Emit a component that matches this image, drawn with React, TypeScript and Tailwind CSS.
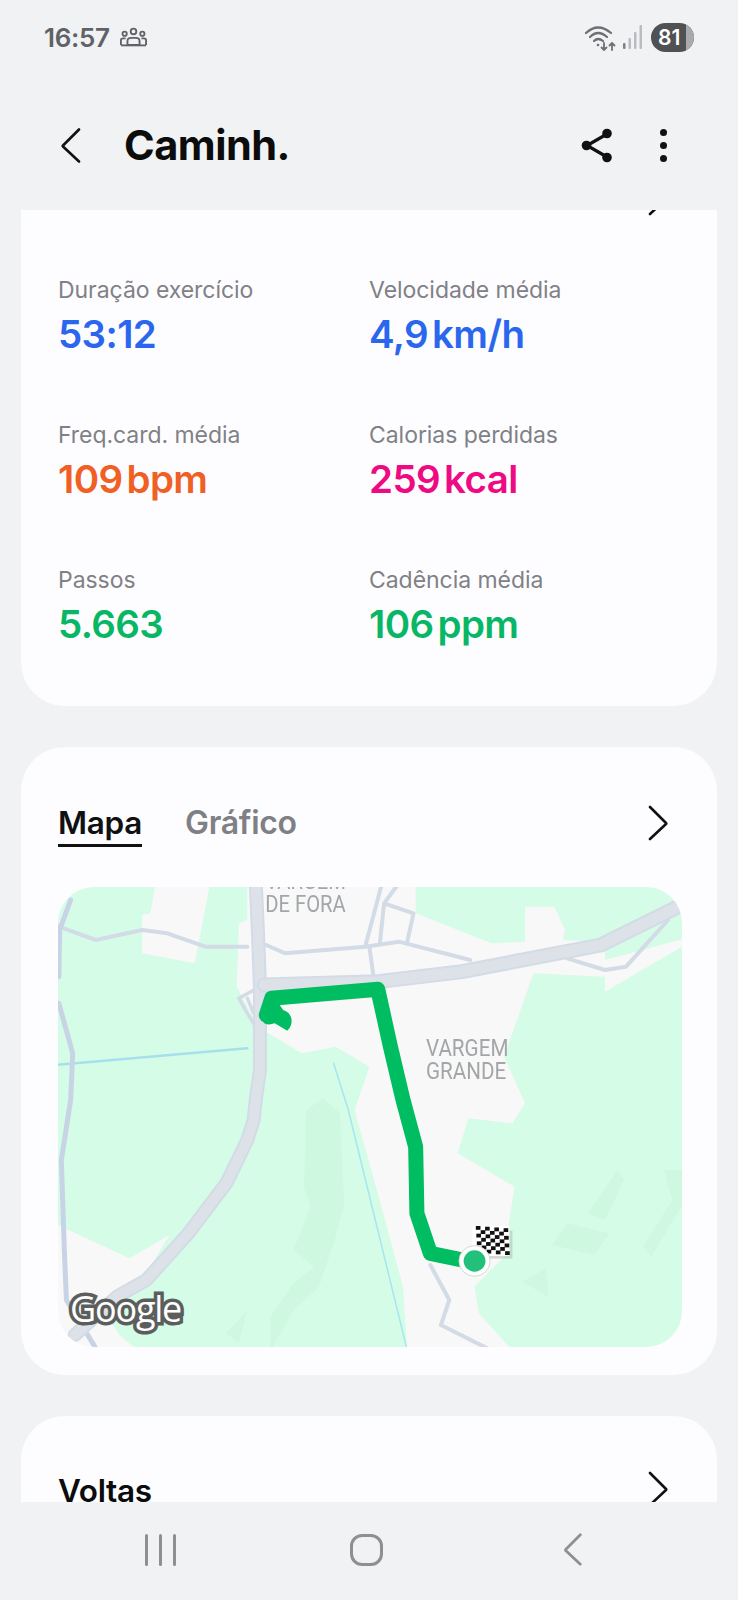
import React from "react";

const font = { fontFamily: "Inter, 'Liberation Sans', sans-serif" };

function Chevron({ dir = "right", className = "", color = "#111", sw = 3 }: { dir?: "left" | "right"; className?: string; color?: string; sw?: number }) {
  return (
    <svg viewBox="0 0 20 36" className={className} fill="none" stroke={color} strokeWidth={sw} strokeLinecap="round" strokeLinejoin="round">
      {dir === "right" ? <path d="M2 2 L18 18 Q18.500 18.500 18 19 L2 34" /> : <path d="M18 2 L2 18 Q1.500 18.500 2 19 L18 34" />}
    </svg>
  );
}

function Stat({ label, value, unit, color }: { label: string; value: string; unit?: string; color: string }) {
  return (
    <div className="flex flex-col h-[145px]">
      <div className="text-[23px] leading-[28px] text-[#808186] tracking-[-0.05px]">{label}</div>
      <div className={`flex gap-[4px] text-[38.500px] leading-[44px] mt-[8px] font-semibold tracking-[-0.6px] ${color}`}>
        <span>{value}</span>
        {unit ? <span>{unit}</span> : null}
      </div>
    </div>
  );
}

function MapArt() {
  const road = (d: string, w: number, c = "#d3dbe6") => (
    <path d={d} fill="none" stroke={c} strokeWidth={w} strokeLinecap="round" strokeLinejoin="round" vectorEffect="non-scaling-stroke" />
  );
  const cells: React.ReactNode[] = [];
  for (let r = 0; r < 7; r++) {
    for (let c = 0; c < 7; c++) {
      if ((r + c) % 2 === 0) {
        cells.push(
          <rect key={`${r}-${c}`} x={1033 + c * 11 + r * 0.6} y={1068 + r * 11.500 + c * 1.100} width={11} height={11.500} fill="#111" />
        );
      }
    }
  }
  return (
    <svg viewBox="40 51 1483 1380" preserveAspectRatio="none" className="absolute inset-0 w-full h-full blur-[0.4px]">
      <rect x="30" y="41" width="1503" height="1400" fill="#d5fce6" />
      <g fill="#f8f8f8">
        <polygon points="270,50 400,50 365,280 240,250 240,135 260,130" />
        <polygon points="470,160 490,150 490,40 890,40 890,130 1070,220 1150,215 1150,110 1220,110 1245,180 1240,210 1340,215 1340,270 1530,205 1530,225 1340,365 1340,320 1170,310 1100,560 1150,700 1120,760 1015,745 990,850 1125,950 1110,1070 1100,1160 1030,1250 1040,1330 1120,1441 870,1441 860,1250 800,970 745,720 780,590 700,530 620,550 540,490 520,480 465,350" />
        <polygon points="30,1060 210,1165 305,1095 240,1230 150,1330 190,1400 230,1441 30,1441" />
      </g>
      <g fill="#cff8e0">
        <polygon points="670,685 710,730 720,1000 700,1100 660,1250 600,1320 545,1441 545,1340 600,1240 650,1190 600,1140 640,1010 625,950 630,720" />
        <polygon points="1370,900 1385,930 1340,1050 1300,1030" />
        <polygon points="1250,1060 1350,1090 1315,1155 1215,1125" />
        <polygon points="1200,1195 1205,1280 1145,1235" />
        <polygon points="1480,900 1530,900 1530,990 1450,1160 1430,1130 1500,990" />
        <polygon points="490,1320 470,1420 440,1390" />
      </g>
      {road("M30 585 L490 535", 2.500, "#a6e0ee")}
      {road("M695 580 L730 720 L870 1441", 1.500, "#a5e6f0")}
      {road("M42 170 L130 210 L240 180 L300 190 L390 230 L490 230", 4)}
      {road("M535 225 L580 250 L770 230 L850 215 L1020 270", 4)}
      {road("M770 230 L810 40 M805 220 L815 100 L885 130 L870 215 M815 100 L850 40", 4)}
      {road("M780 230 L790 320", 4)}
      {road("M1250 265 L1340 300 L1390 290 L1490 150", 4)}
      {road("M70 90 L44 180 L42 320 M42 400 L75 550 L70 690 L48 870 L55 1140 L60 1290 L130 1435", 5, "#c8d4e5")}
      {road("M520 350 L470 385 L490 430 L515 480 M490 385 L505 430", 3.500)}
      {road("M925 1185 L970 1290 L950 1365 L1070 1441", 4)}
      {road("M510 40 L515 180 L520 350 L520 600 L510 690 L505 750 L490 810 L440 940 L350 1090 L250 1230 L180 1280 L80 1395", 14)}
      {road("M510 40 L515 180 L520 350 L520 600 L510 690 L505 750 L490 810 L440 940 L350 1090 L250 1230 L180 1280 L80 1395", 10, "#dde2e9")}
      {road("M530 345 L800 335 L1000 305 L1330 225 L1530 100", 15)}
      {road("M530 345 L800 335 L1000 305 L1330 225 L1530 100", 11, "#dde2e9")}
      <path d="M528 455 C515 430 530 385 548 370 L575 420 C600 430 600 465 585 482 L555 460 C545 465 530 465 528 455 Z" fill="#00bd62" />
      <path d="M535 435 L548 385 L800 358 L830 530 L860 690 L890 830 L893 1030 L925 1150 L1020 1175" fill="none" stroke="#00bd62" strokeWidth={15} strokeLinecap="round" strokeLinejoin="round" vectorEffect="non-scaling-stroke" />
      <rect x="1040" y="1082" width="80" height="84" fill="#9a9a9a" fillOpacity="0.35" />
      <rect x="1025" y="1068" width="88" height="90" fill="#ffffff" />
      {cells}
      <ellipse cx="1030" cy="1173" rx="37" ry="46" fill="#ffffff" stroke="#d5d8d8" strokeWidth="1" vectorEffect="non-scaling-stroke" />
      <ellipse cx="1030" cy="1173" rx="26" ry="32" fill="#22c07a" />
    </svg>
  );
}

export default function App() {
  return (
    <div style={font} className="w-[738px] h-[1600px] bg-[#f1f2f4] flex flex-col overflow-hidden">
      <div className="h-[74px] flex items-center justify-between pl-[44px] pr-[44px] shrink-0">
        <div className="flex items-center gap-[10px]">
          <span className="text-[26px] font-semibold text-[#5f6266] tracking-[-0.3px]">16:57</span>
          <svg width="27" height="20" viewBox="0 0 29 21" fill="none" stroke="#5f6266" strokeWidth="2">
            <circle cx="14.500" cy="4.500" r="3" />
            <circle cx="5" cy="7" r="2.300" />
            <circle cx="24" cy="7" r="2.300" />
            <path d="M8 19 V15 Q8 11.500 12 11.500 H17 Q21 11.500 21 15 V19 Z" />
            <path d="M1 19 V14 Q1 12 3.500 12 H6 M28 19 V14 Q28 12 25.500 12 H23" />
            <path d="M1 19.500 H28" />
          </svg>
        </div>
        <div className="flex items-center gap-[7px]">
          <svg width="32" height="30" viewBox="0 0 32 30" fill="none" stroke="#6c6f73" strokeLinecap="round">
            <path d="M2 11 Q14 0 27 11" strokeWidth="2.200" />
            <path d="M6 15 Q14 7 23 15" strokeWidth="2.200" />
            <path d="M10 19 Q14 15 19 19" strokeWidth="2.200" />
            <circle cx="14" cy="23" r="1.300" fill="#6c6f73" stroke="none" />
            <path d="M20 21 V28 M17.500 25.500 L20 28 L22.500 25.500 M28 28 V21 M25.500 23.500 L28 21 L30.500 23.500" strokeWidth="1.800" />
          </svg>
          <svg width="20" height="26" viewBox="0 0 20 26" fill="#b9bcbf">
            <rect x="0" y="19" width="2.500" height="6" rx="1" fill="#7d8084" />
            <rect x="5.500" y="14" width="2.500" height="11" rx="1" />
            <rect x="11" y="8" width="2.500" height="17" rx="1" />
            <rect x="16.500" y="1" width="2.500" height="24" rx="1" />
          </svg>
          <div className="relative w-[43px] h-[29px] rounded-full bg-[#505153] overflow-hidden flex items-center pl-[7px] ml-[1px]">
            <div className="absolute right-0 top-0 bottom-0 w-[8px] bg-[#a9aaab]" />
            <span className="relative text-[21px] font-semibold text-white leading-none">81</span>
          </div>
        </div>
      </div>

      <div className="h-[136px] flex items-center justify-between shrink-0 pl-[61px] pr-[71px] pt-[7px]">
        <div className="flex items-center gap-[43px]">
          <Chevron dir="left" className="w-[20px] h-[37px]" sw={2.600} />
          <span className="text-[41.500px] font-bold text-[#0c0c0c] tracking-[-0.5px] leading-none">Caminh.</span>
        </div>
        <div className="flex items-center gap-[47px]">
          <svg width="32" height="35" viewBox="0 0 32 35" fill="#111" stroke="#111" strokeWidth="3.200">
            <path d="M26 6 L6 17.500 L26 29" fill="none" />
            <circle cx="26" cy="5.500" r="4.800" stroke="none" />
            <circle cx="5.500" cy="17.500" r="4.800" stroke="none" />
            <circle cx="26" cy="29.500" r="4.800" stroke="none" />
          </svg>
          <div className="flex flex-col gap-[6px]">
            <span className="w-[7px] h-[7px] rounded-full bg-[#111]" />
            <span className="w-[7px] h-[7px] rounded-full bg-[#111]" />
            <span className="w-[7px] h-[7px] rounded-full bg-[#111]" />
          </div>
        </div>
      </div>

      <div className="flex-1 min-h-0 overflow-hidden px-[21px] flex flex-col gap-[41px]">
        <section className="relative h-[496px] shrink-0 bg-[#fdfdff] rounded-b-[44px] pt-[66px] pl-[37px] grid grid-cols-[311px_1fr]">
          <Chevron className="absolute right-[49px] -top-[30px] w-[20px] h-[36px]" sw={2.600} />
          <Stat label="Duração exercício" value="53:12" color="text-[#2a67ee]" />
          <Stat label="Velocidade média" value="4,9" unit="km/h" color="text-[#2a67ee]" />
          <Stat label="Freq.card. média" value="109" unit="bpm" color="text-[#f06025]" />
          <Stat label="Calorias perdidas" value="259" unit="kcal" color="text-[#ee0a82]" />
          <Stat label="Passos" value="5.663" color="text-[#08b765]" />
          <Stat label="Cadência média" value="106" unit="ppm" color="text-[#08b765]" />
        </section>

        <section className="h-[628px] shrink-0 bg-[#fdfdff] rounded-[44px] px-[37px] pt-[56px]">
          <div className="flex items-start justify-between h-[84px]">
            <div className="flex gap-[43px]">
              <div className="border-b-[3px] border-[#111] h-[44px] text-[31.500px] leading-[40px] font-semibold text-[#111] tracking-[-0.3px]">Mapa</div>
              <div className="text-[32px] leading-[40px] font-semibold text-[#7f8083] tracking-[-0.3px]">Gráfico</div>
            </div>
            <Chevron className="w-[20px] h-[36px] mr-[12px] mt-[2px]" sw={2.600} />
          </div>
          <div className="relative h-[460px] w-[624px] rounded-[36px] overflow-hidden">
            <MapArt />
            <div className="absolute left-[202px] -top-[17px] w-[86px] text-center text-[23px] leading-[23px] text-[#a3a6a9] whitespace-nowrap" style={{ fontFamily: "Roboto, sans-serif" }}>
              <div className="scale-x-[0.88]">VARGEM</div>
              <div className="scale-x-[0.88]">DE FORA</div>
            </div>
            <div className="absolute left-[362px] top-[150px] w-[86px] text-center text-[24px] leading-[23px] text-[#a3a6a9] whitespace-nowrap" style={{ fontFamily: "Roboto, sans-serif" }}>
              <div className="scale-x-[0.86]">VARGEM</div>
              <div className="scale-x-[0.86]">GRANDE</div>
            </div>
            <div className="absolute left-[12px] top-[399px] text-[36px] leading-[46px] font-medium text-white tracking-[-1.2px] [-webkit-text-stroke:7px_#5b5e5c] [paint-order:stroke_fill]" style={{ fontFamily: "'Open Sans', sans-serif" }}>
              Google
            </div>
          </div>
        </section>

        <section className="h-[200px] shrink-0 bg-[#fdfdff] rounded-[44px] px-[37px] pt-[55px] flex items-start justify-between">
          <div className="text-[31.500px] leading-[40px] font-semibold text-[#0c0c0c] tracking-[-0.3px]">Voltas</div>
          <Chevron className="w-[20px] h-[36px] mr-[12px] mt-[0px]" sw={2.600} />
        </section>
      </div>

      <div className="h-[98px] shrink-0 flex items-start pt-[31px] relative">
        <div className="flex items-center justify-between w-full pl-[145px] pr-[155px]">
          <div className="flex gap-[11px] h-[32px]">
            <span className="w-[3px] h-full bg-[#8e8f91] rounded-full" />
            <span className="w-[3px] h-full bg-[#8e8f91] rounded-full" />
            <span className="w-[3px] h-full bg-[#8e8f91] rounded-full" />
          </div>
          <div className="w-[33px] h-[32px] border-[3px] border-[#8e8f91] rounded-[12px] mr-[6px]" />
          <Chevron dir="left" className="w-[20px] h-[33px]" color="#8e8f91" sw={3} />
        </div>
      </div>
    </div>
  );
}
